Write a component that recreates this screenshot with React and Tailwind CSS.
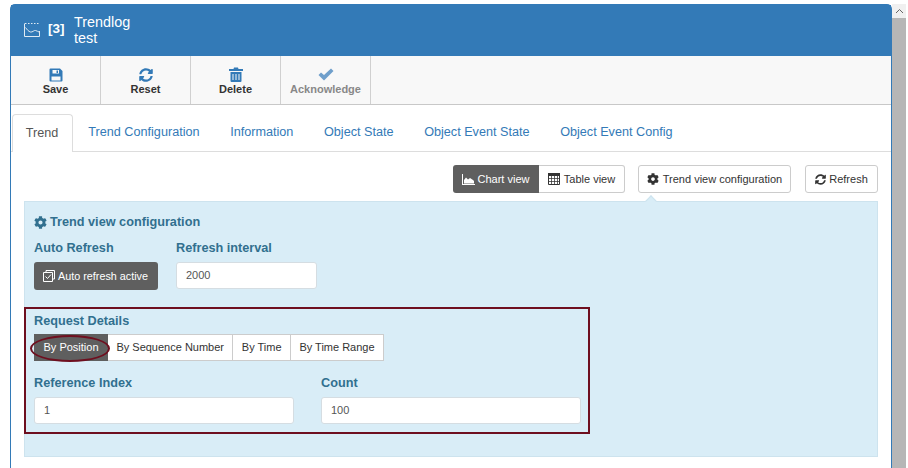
import { FaCog, FaSyncAlt } from 'react-icons/fa';

function SaveIcon() {
    return (
        <svg width="14" height="14" viewBox="0 0 14 14">
            <path fillRule="evenodd" fill="currentColor" d="M1.5 0.5h9.5l2.5 2.5v9.5a1 1 0 0 1-1 1h-11a1 1 0 0 1-1-1v-11a1 1 0 0 1 1-1zM3.5 2v3.5h6.5V2zM2.5 8.5v4h9v-4z" />
            <path fill="currentColor" d="M7.5 2.5h1.5v2.5H7.5z" />
        </svg>
    );
}

function TrashIcon() {
    return (
        <svg width="14" height="15" viewBox="0 0 14 15">
            <path fill="currentColor" d="M5 0.5h4l0.5 1.5H14v2H0V2h4.5z" />
            <path fillRule="evenodd" fill="currentColor" d="M1.5 5h11v9a1 1 0 0 1-1 1h-9a1 1 0 0 1-1-1zM3.5 7v6h1V7zM6.5 7v6h1V7zM9.5 7v6h1V7z" />
        </svg>
    );
}

function CheckIcon() {
    return (
        <svg width="16" height="13" viewBox="0 0 16 13">
            <path fill="currentColor" d="M0.5 7l2.5-2.5 3 2.5 7-6.5 2.5 2.5-9.5 9.5z" />
        </svg>
    );
}

function AreaIcon() {
    return (
        <svg width="13" height="11" viewBox="0 0 13 11">
            <path fill="currentColor" d="M0 0h1v10h12v1H0z" />
            <path fill="currentColor" d="M2 9.5V6l2-2.5 2 2 2-1.5 3 2 1 1v2.5z" />
        </svg>
    );
}

function TableIcon() {
    return (
        <svg width="12" height="12" viewBox="0 0 12 12" fill="none" stroke="currentColor" strokeWidth="1">
            <path fill="currentColor" stroke="none" d="M0 0h12v3H0z" />
            <path d="M0.5 0.5h11v11h-11z" />
            <path d="M0.5 5.5h11M0.5 8.5h11M3.5 3v8.5M6.5 3v8.5M9.5 3v8.5" opacity="0.75" />
        </svg>
    );
}

function TrendIcon() {
    return (
        <svg width="16" height="14" viewBox="0 0 16 14" fill="none" stroke="currentColor" strokeWidth="1" opacity="0.85">
            <path d="M0.5 0.5v13h15V8" />
            <path d="M1 0.5h14" strokeDasharray="1.5 1.5" />
            <path d="M1.5 4.5c1.5 2 3 4 5 4.5s3.5-2 5-1.5 2.5 1 3.5 1.5" />
        </svg>
    );
}

function CheckboxIcon() {
    return (
        <svg width="12" height="12" viewBox="0 0 12 12" fill="none" stroke="currentColor" strokeWidth="1">
            <path d="M3 2.5v-2h8.500v8.500h-2" />
            <path d="M0.5 2.500h9v9h-9z" />
            <path d="M2.500 6.500l2 2 3.500-4" />
        </svg>
    );
}

const toolbarItems = [
    { label: 'Save', icon: <SaveIcon /> },
    { label: 'Reset', icon: <FaSyncAlt className="size-[14px]" /> },
    { label: 'Delete', icon: <TrashIcon /> },
];

const tabs = ['Trend Configuration', 'Information', 'Object State', 'Object Event State', 'Object Event Config'];
const requestModes = ['By Sequence Number', 'By Time', 'By Time Range'];

function Field({ label, value, className = '' }) {
    return (
        <div className={className}>
            <div className="h-[17px] text-[12.7px] leading-[17px] font-bold text-[#31708f]">{label}</div>
            <div className="mt-[5px] flex h-[27px] items-center rounded-[3px] border border-[#d5dde2] bg-white pl-[9px] text-[11px] text-[#555]">
                {value}
            </div>
        </div>
    );
}

export default function App() {
    return (
        <div className="flex h-[468px] w-[908px] overflow-hidden bg-white pt-[4px] pr-[2px] pl-[10px] font-['Liberation_Sans',Arial,sans-serif]">
            <div className="flex w-[882px] flex-col rounded-t-[5px] border-x border-t border-[#337ab7]">
                <header className="flex h-[51px] shrink-0 items-center bg-[#337ab7] pb-[2px] pl-[13px] text-white">
                    <TrendIcon />
                    <span className="ml-[8px] text-[13.5px] font-bold">[3]</span>
                    <div className="ml-[9.5px] text-[14.4px] leading-[16px]">
                        <div>Trendlog</div>
                        <div>test</div>
                    </div>
                </header>

                <div className="flex h-[49px] shrink-0 border-b border-[#c8c8c8] bg-[#f8f8f8]">
                    {toolbarItems.map((item) => (
                        <div key={item.label} className="flex w-[90px] flex-col items-center border-r border-[#d0d0d0] pt-[11px] text-[11px] font-bold text-[#333]">
                            <span className="flex h-[15px] items-center text-[#337ab7]">{item.icon}</span>
                            <span className="mt-[1px] leading-[13px]">{item.label}</span>
                        </div>
                    ))}
                    <div className="flex w-[90px] flex-col items-center border-r border-[#d0d0d0] pt-[11px] text-[11px] font-bold text-[#888]">
                        <span className="flex h-[15px] items-center text-[#6f9fcb]">
                            <CheckIcon />
                        </span>
                        <span className="mt-[1px] leading-[13px]">Acknowledge</span>
                    </div>
                </div>

                <nav className="mt-[9px] flex h-[38px] shrink-0 border-b border-[#ddd] pl-px text-[12.65px]">
                    <div className="h-[38px] w-[61px] rounded-t-[4px] border-x border-t border-[#ddd] bg-white pt-[9px] pr-px text-center leading-[18px] text-[#555]">
                        Trend
                    </div>
                    {tabs.map((tab) => (
                        <div key={tab} className="mr-[15.3px] ml-[15.3px] pt-[9px] leading-[18px] whitespace-nowrap text-[#337ab7] first:ml-[17px]">
                            {tab}
                        </div>
                    ))}
                </nav>

                <div className="mt-[13px] flex shrink-0 justify-end pr-[13px] text-[11px] text-[#333]">
                    <div className="flex h-[28px] rounded-[3px]">
                        <div className="flex w-[86px] items-center justify-center gap-[3px] rounded-l-[3px] bg-[#5f5f5f] pr-px text-white">
                            <AreaIcon />
                            Chart view
                        </div>
                        <div className="flex w-[86px] items-center justify-center gap-[4px] rounded-r-[3px] border border-l-0 border-[#ccc] bg-white">
                            <TableIcon />
                            Table view
                        </div>
                    </div>
                    <div className="ml-[13px] flex h-[28px] w-[153px] items-center justify-center gap-[4px] rounded-[3px] border border-[#ccc] bg-white">
                        <FaCog className="size-[12px]" />
                        Trend view configuration
                    </div>
                    <div className="ml-[14px] flex h-[28px] w-[73px] items-center justify-center gap-[3px] rounded-[3px] border border-[#ccc] bg-white">
                        <FaSyncAlt className="size-[11px]" />
                        Refresh
                    </div>
                </div>

                <section className="relative mt-[8px] mr-[13px] ml-[13px] h-[256px] shrink-0 border border-[#cde3ee] bg-[#d9edf7] px-[9px] pt-[12px] text-[#31708f]">
                    <span className="absolute -top-[5px] left-[622px] size-[8px] rotate-45 border-t border-l border-[#cde3ee] bg-[#d9edf7]" />
                    <h3 className="flex h-[17px] items-center gap-[3px] text-[12.7px] font-bold">
                        <FaCog className="size-[13px]" />
                        Trend view configuration
                    </h3>

                    <div className="mt-[9px] flex">
                        <div className="w-[142px]">
                            <div className="h-[17px] text-[12.7px] leading-[17px] font-bold">Auto Refresh</div>
                            <div className="mt-[5px] flex h-[28px] w-[124px] items-center justify-center gap-[3px] rounded-[3px] bg-[#5f5f5f] pr-px text-[10.8px] text-white">
                                <CheckboxIcon />
                                Auto refresh active
                            </div>
                        </div>
                        <Field label="Refresh interval" value="2000" className="w-[141px]" />
                    </div>

                    <div className="relative -mx-[10px] mt-[17px] h-[127px] w-[566px] border-2 border-[#6e0f1f] pt-[4px] pr-[7px] pl-[8px]">
                        <div className="h-[17px] text-[12.7px] leading-[17px] font-bold">Request Details</div>
                        <div className="relative mt-[4px] flex h-[27px] w-[350px] text-[11px] text-[#333]">
                            <div className="flex w-[74px] items-center justify-center bg-[#5f5f5f] text-white">By Position</div>
                            {requestModes.map((mode) => (
                                <div key={mode} className="flex grow items-center justify-center border border-l-0 border-[#ccc] bg-white px-[8px] whitespace-nowrap">
                                    {mode}
                                </div>
                            ))}
                            <span className="absolute top-[1px] -left-[4px] h-[27px] w-[80px] rounded-[50%] border-2 border-[#6e0f1f]" />
                        </div>
                        <div className="mt-[14px] flex gap-[27px]">
                            <Field label="Reference Index" value="1" className="w-[260px]" />
                            <Field label="Count" value="100" className="w-[260px]" />
                        </div>
                    </div>
                </section>
            </div>

            <aside className="flex w-[14px] shrink-0 flex-col bg-[#b6b6b6]">
                <div className="flex h-[14px] items-center justify-center bg-[#f0f0f0]">
                    <svg width="9" height="6" viewBox="0 0 9 6" fill="none" stroke="#666" strokeWidth="1">
                        <path d="M1 5l3.500-3.500L8 5" />
                    </svg>
                </div>
            </aside>
        </div>
    );
}
